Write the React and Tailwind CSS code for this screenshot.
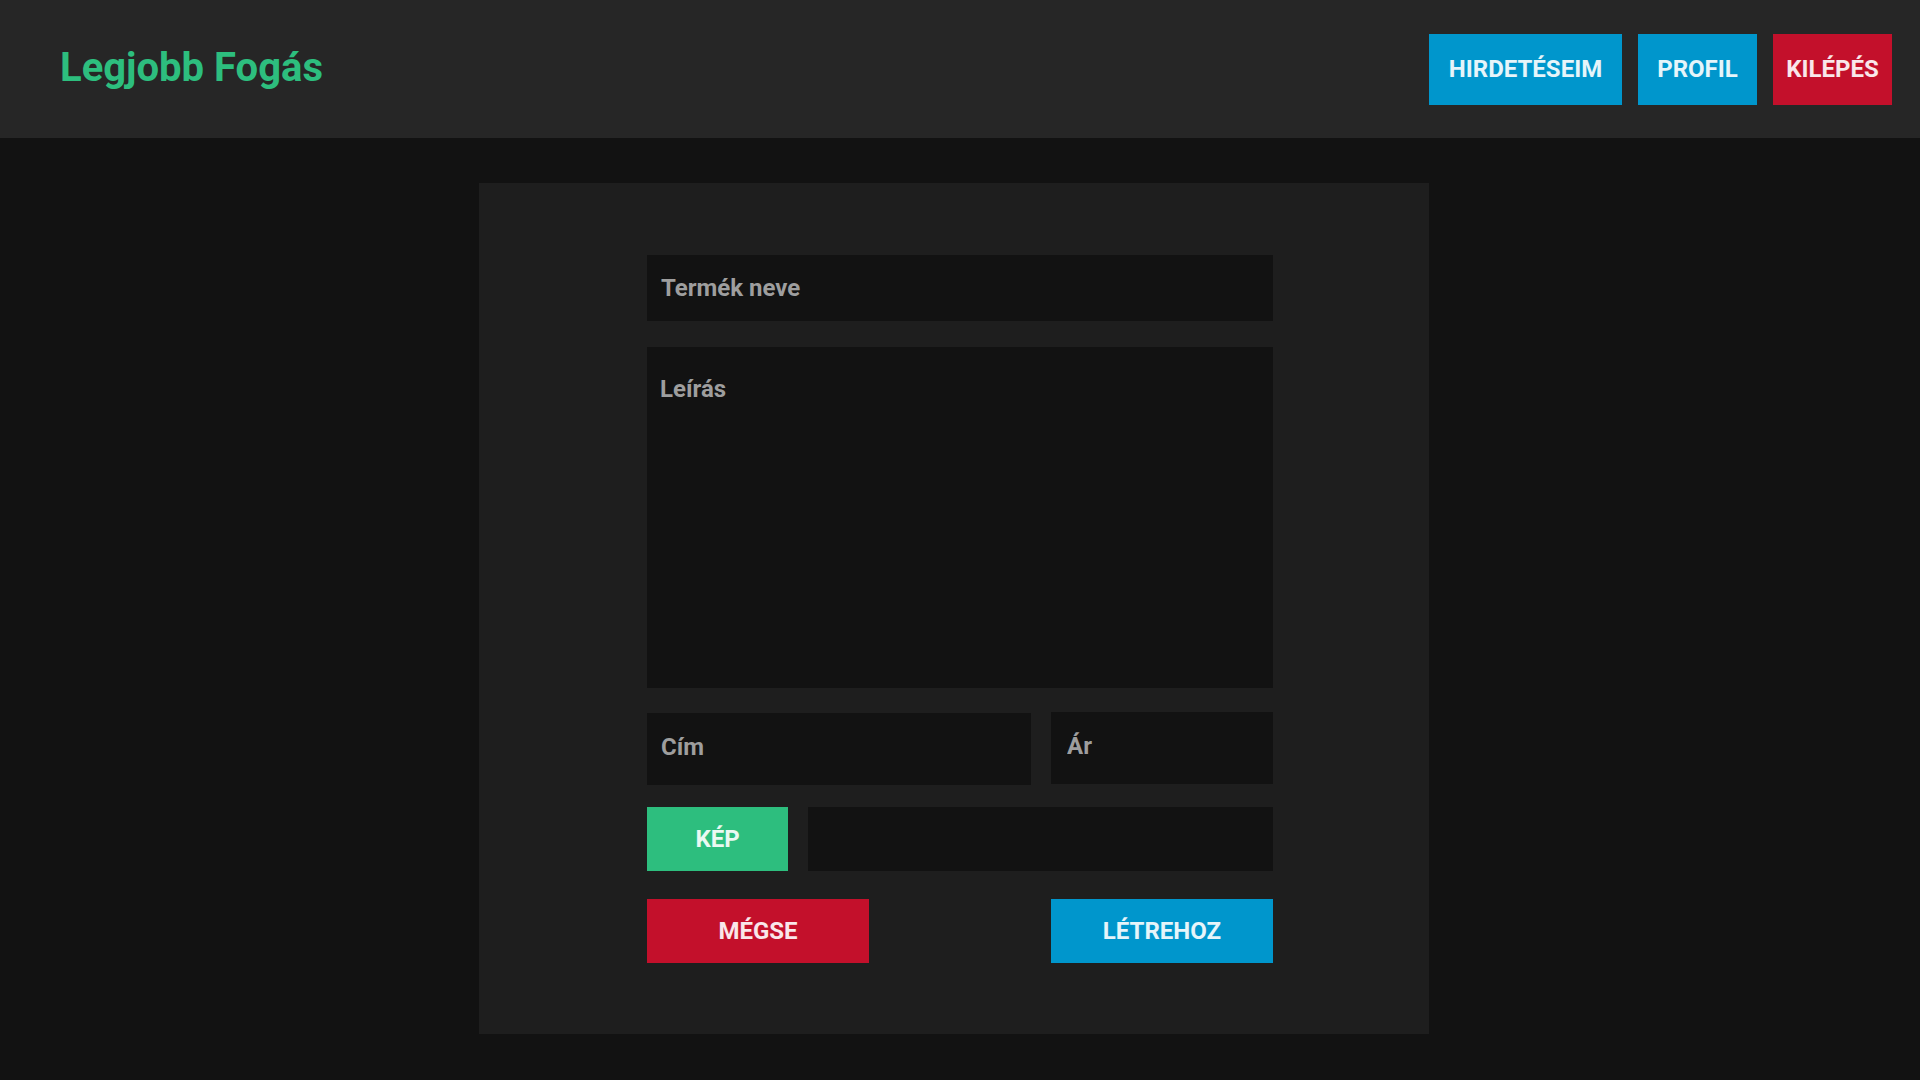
import React from "react";

export default function App() {
  const font = { fontFamily: "Roboto, 'Noto Sans', sans-serif" };
  return (
    <div style={font} className="min-h-[1080px] w-full bg-[#121212] font-['Roboto',sans-serif]">
      <header className="h-[138px] bg-[#262626] flex items-center justify-between pl-[60px] pr-[28px]">
        <h1 className="text-[40px] font-bold text-[#2dbe7e] leading-none mt-[-2px]">Legjobb Fogás</h1>
        <nav className="flex items-center gap-4">
          <button className="h-[71px] w-[193px] bg-[#0096cc] text-white/90 text-[24px] font-bold">HIRDETÉSEIM</button>
          <button className="h-[71px] w-[119px] bg-[#0096cc] text-white/90 text-[24px] font-bold">PROFIL</button>
          <button className="h-[71px] w-[119px] bg-[#c3102b] text-white/90 text-[24px] font-bold">KILÉPÉS</button>
        </nav>
      </header>
      <main className="pt-[45px]">
        <div className="ml-[479px] w-[950px] h-[851px] bg-[#1e1e1e] pt-[72px] pl-[168px]">
          <form className="w-[626px] flex flex-col" onSubmit={(e) => e.preventDefault()}>
            <input
              type="text"
              placeholder="Termék neve"
              className="h-[66px] w-full bg-[#121212] px-[14px] text-[24px] font-bold text-[#9e9e9e] placeholder:text-[#9e9e9e] outline-none"
            />
            <textarea
              placeholder="Leírás"
              className="mt-[26px] h-[341px] w-full resize-none bg-[#121212] px-[13px] pt-[24px] text-[24px] font-bold text-[#9e9e9e] placeholder:text-[#9e9e9e] outline-none"
            />
            <div className="mt-[25px] flex gap-5">
              <input
                type="text"
                placeholder="Cím"
                className="h-[72px] min-w-0 flex-1 bg-[#121212] px-[14px] pb-[4px] text-[24px] font-bold text-[#9e9e9e] placeholder:text-[#9e9e9e] outline-none"
              />
              <input
                type="text"
                placeholder="Ár"
                className="h-[72px] w-[222px] -mt-px bg-[#121212] px-[16px] pb-[4px] text-[24px] font-bold text-[#9e9e9e] placeholder:text-[#9e9e9e] outline-none"
              />
            </div>
            <div className="mt-[22px] flex gap-5 h-[64px]">
              <button type="button" className="w-[141px] h-full bg-[#2dbe7e] text-white/90 text-[24px] font-bold">KÉP</button>
              <div className="flex-1 h-full bg-[#121212]"></div>
            </div>
            <div className="mt-[28px] flex justify-between h-[64px]">
              <button type="button" className="w-[222px] h-full bg-[#c3102b] text-white/90 text-[24px] font-bold">MÉGSE</button>
              <button type="submit" className="w-[222px] h-full bg-[#0096cc] text-white/90 text-[24px] font-bold">LÉTREHOZ</button>
            </div>
          </form>
        </div>
      </main>
    </div>
  );
}
